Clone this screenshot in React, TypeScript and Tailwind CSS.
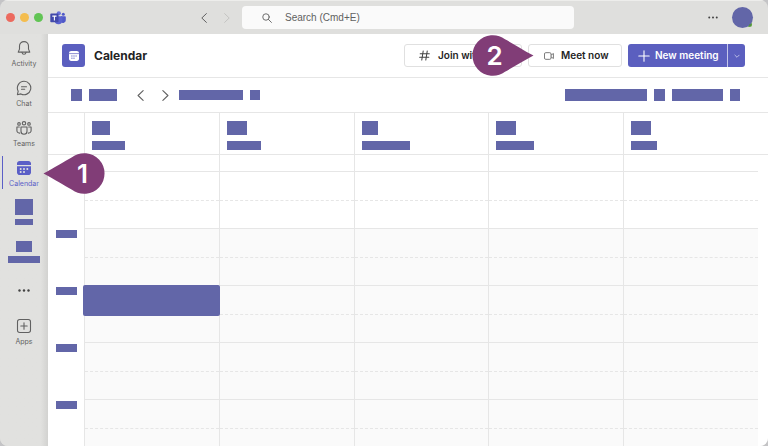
import React from "react";

interface Day {
  id: string;
  date: string;
  name: string;
}

const DAYS: Day[] = [
  { id: "mon", date: "w-[18px]", name: "w-[33px]" },
  { id: "tue", date: "w-5", name: "w-[34px]" },
  { id: "wed", date: "w-4", name: "w-12" },
  { id: "thu", date: "w-5", name: "w-[38px]" },
  { id: "fri", date: "w-5", name: "w-[26px]" },
];

const HOURS = [
  { id: 7, label: false, working: false, event: false },
  { id: 8, label: true, working: true, event: false },
  { id: 9, label: true, working: true, event: true },
  { id: 10, label: true, working: true, event: false },
  { id: 11, label: true, working: true, event: false },
];

const App: React.FC = () => (
  <div className="h-screen overflow-hidden bg-[#c4c4c6] font-['Inter',sans-serif] text-[#242424]">
    <div className="flex h-full flex-col overflow-hidden rounded-lg bg-[#dfdfdd]">
      <TitleBar />
      <div className="flex min-h-0 flex-1">
        <Sidebar />
        <main className="flex min-w-0 flex-1 flex-col bg-white">
          <PageHeader />
          <Toolbar />
          <WeekGrid />
        </main>
      </div>
    </div>
  </div>
);

const TitleBar: React.FC = () => (
  <header className="flex h-[34px] shrink-0 items-center border-t border-[#ededeb] pr-[15px] pl-[6px]">
    <div className="flex items-center gap-[5px]">
      <span className="size-[9px] rounded-full bg-[#ec6a5e]" />
      <span className="size-[9px] rounded-full bg-[#f4bd4f]" />
      <span className="size-[9px] rounded-full bg-[#61c454]" />
    </div>
    <TeamsLogo />
    <div className="flex flex-1 items-center justify-end gap-[17px] pr-3">
      <button aria-label="Back" className="text-[#616161]">
        <Chevron direction="left" className="h-2.5 w-1.5" />
      </button>
      <button aria-label="Forward" className="text-[#c4c4c2]">
        <Chevron direction="right" className="h-2.5 w-1.5" />
      </button>
    </div>
    <label className="flex h-[23px] w-4/9 items-center gap-[13px] rounded bg-[#fafafa] pl-5">
      <svg viewBox="0 0 12 12" className="size-[10px] shrink-0" fill="none" stroke="#616161" strokeWidth="1.1" strokeLinecap="round">
        <circle cx="4.8" cy="4.8" r="3.9" />
        <path d="M7.7 7.7 11.3 11.3" />
      </svg>
      <input
        type="text"
        aria-label="Search"
        placeholder="Search (Cmd+E)"
        className="w-full bg-transparent font-['Liberation_Sans',sans-serif] text-[10px] outline-none placeholder:text-[#616161]"
      />
    </label>
    <div className="flex w-[179px] items-center justify-end gap-[14px]">
      <button aria-label="Settings and more" className="text-[#424242]">
        <Dots className="h-[3px] w-[10px]" />
      </button>
      <div className="relative size-[21px]">
        <span className="absolute right-px bottom-px size-[5px] rounded-full bg-[#5fa53f]" />
        <span className="absolute inset-0 rounded-full bg-[#6266a8]" />
        <span className="absolute right-[2px] bottom-[2px] size-[2px] rounded-full bg-[#4f8a4a]" />
      </div>
    </div>
  </header>
);

const Sidebar: React.FC = () => (
  <nav className="flex w-12 shrink-0 flex-col bg-linear-to-r from-[#e1e1df] from-85% to-[#d2d2d0] pt-[2px] text-[#616161]">
    <NavItem label="Activity">
      <path d="M8 1.6c-2.6 0-4.5 2-4.5 4.5v3L2.2 12.1h11.6L12.5 9.1V6.1C12.5 3.6 10.6 1.6 8 1.6Z" />
      <path d="M6 12.3c.2 1.3 1 2 2 2s1.8-.7 2-2" />
    </NavItem>
    <NavItem label="Chat">
      <path d="M8 1.3a6.7 6.7 0 1 1-3.1 12.6L1.400 14.700l.8-3.500A6.700 6.700 0 0 1 8 1.300Z" />
      <path d="M5.5 6.800h5M5.500 9.300h3.200" />
    </NavItem>
    <NavItem label="Teams">
      <circle cx="8" cy="3.3" r="1.7" />
      <circle cx="3" cy="3.9" r="1.3" />
      <circle cx="13" cy="3.9" r="1.3" />
      <path d="M5 7h6v4.200a3 3 0 0 1-6 0Z" />
      <path d="M3.300 7H.9v3.400c0 1.700 1.200 2.800 2.900 2.700M12.700 7h2.400v3.400c0 1.700-1.200 2.800-2.900 2.700" />
    </NavItem>
    <NavItem label="Calendar" active>
      <path
        d="M1 5V3.600C1 2.200 2.200 1 3.600 1h8.800C13.800 1 15 2.200 15 3.600V5ZM1 6.200h14v6.200c0 1.400-1.200 2.600-2.600 2.600H3.600C2.200 15 1 13.800 1 12.400Z"
        fill="currentColor"
        stroke="none"
      />
      <g fill="#e1e1df" stroke="none">
        <circle cx="4.7" cy="9" r="1" />
        <circle cx="8" cy="9" r="1" />
        <circle cx="11.3" cy="9" r="1" />
        <circle cx="4.7" cy="12" r="1" />
        <circle cx="8" cy="12" r="1" />
      </g>
    </NavItem>
    <div className="flex flex-col items-center pt-[3px]">
      <Block className="h-4 w-[18px]" />
      <Block className="mt-1 h-[6px] w-[18px]" />
      <Block className="mt-4 h-[11px] w-4" />
      <Block className="mt-1 h-[7px] w-8" />
      <button aria-label="More apps" className="mt-[26px] text-[#424242]">
        <Dots className="h-[3px] w-3" />
      </button>
    </div>
    <div className="pt-[22px]">
      <NavItem label="Apps">
        <rect x="1.5" y="1.5" width="13" height="13" rx="2.2" />
        <path d="M8 4.800v6.400M4.800 8h6.400" />
      </NavItem>
    </div>
  </nav>
);

const NavItem: React.FC<{
  label: string;
  active?: boolean;
  children: React.ReactNode;
}> = ({ label, active = false, children }) => (
  <div className="relative">
    <a
      href="#"
      aria-current={active ? "page" : undefined}
      className={`flex h-10 flex-col items-center gap-[3px] pt-1 ${active ? "text-[#5b5fc7]" : ""}`}
    >
      <svg viewBox="0 0 16 16" className="size-4 shrink-0" fill="none" stroke="currentColor" strokeWidth="1.1" strokeLinejoin="round" strokeLinecap="round">
        {children}
      </svg>
      <span className="text-[7px] leading-[10px]">{label}</span>
    </a>
    {active && (
      <>
        <span className="absolute top-0 left-[2px] h-[33px] w-px bg-[#5b5fc7]" />
        <Marker label="1" direction="left" className="top-[-3px] left-[43px]" />
      </>
    )}
  </div>
);

const PageHeader: React.FC = () => (
  <div className="flex h-11 shrink-0 items-center border-b border-[#e6e6e6] pr-[23px] pl-[14px]">
    <div className="flex size-[23px] items-center justify-center rounded-[3px] bg-[#5b5fbf]">
      <svg viewBox="0 0 12 12" className="size-3">
        <path d="M1 3.200C1 1.900 1.900 1 3.200 1h5.600C10.100 1 11 1.900 11 3.200v5.600c0 1.300-.9 2.200-2.200 2.200H3.200C1.900 11 1 10.100 1 8.800Z" fill="#fff" />
        <path d="M1 3.600h10" stroke="#5b5fbf" strokeWidth=".7" />
        <path d="M3.300 6h1.200M5.400 6h1.200M7.500 6h1.200M3.300 8.200h1.200M5.400 8.200h1.200" stroke="#5b5fbf" strokeWidth="1" />
      </svg>
    </div>
    <h1 className="ml-[9px] flex-1 text-[12px] font-bold">Calendar</h1>
    <div className="flex gap-[6px] text-[10px] font-semibold">
      <button className="flex h-[23px] w-[118px] items-center gap-2 rounded-[3px] border border-[#e0e0e0] pl-[14px] whitespace-nowrap">
        <svg viewBox="0 0 12 12" className="size-[11px] shrink-0" fill="none" stroke="#424242" strokeWidth="1.1" strokeLinecap="round">
          <path d="M4.600 1 3 11M9 1 7.400 11M1.300 4h10M.7 8h10" />
        </svg>
        Join with an ID
      </button>
      <div className="relative">
        <button className="flex h-[23px] w-[94px] items-center gap-[7px] rounded-[3px] border border-[#e0e0e0] pl-[15px] whitespace-nowrap">
          <svg viewBox="0 0 12 12" className="size-[10px] shrink-0" fill="none" stroke="#616161" strokeLinejoin="round">
            <rect x=".6" y="2" width="7.8" height="8" rx="1.5" />
            <path d="M8.400 5 11.300 3v6L8.400 7" />
          </svg>
          Meet now
        </button>
        <Marker label="2" direction="right" className="top-[-9px] left-[-56px]" />
      </div>
      <div className="flex h-[23px] overflow-hidden rounded-[3px] bg-[#5b5fbf] text-white">
        <button className="flex w-[99px] items-center gap-[5px] pl-[10px] whitespace-nowrap">
          <svg viewBox="0 0 12 12" className="size-3 shrink-0" fill="none" stroke="currentColor" strokeWidth="1.1" strokeLinecap="round">
            <path d="M6 .8v10.400M.8 6h10.400" />
          </svg>
          New meeting
        </button>
        <button aria-label="More meeting options" className="flex w-[18px] items-center justify-center border-l border-[#c5c7ea]">
          <svg viewBox="0 0 8 8" className="size-[6px]" fill="none" stroke="#c5c7ea" strokeWidth="1.2">
            <path d="M.8 2.500 4 5.700l3.200-3.200" />
          </svg>
        </button>
      </div>
    </div>
  </div>
);

const Toolbar: React.FC = () => (
  <div className="flex h-[35px] shrink-0 items-center border-b border-[#e6e6e6] pr-7 pl-[23px]">
    <Block className="h-3 w-[11px]" />
    <Block className="ml-[7px] h-3 w-7" />
    <button aria-label="Previous week" className="ml-5 text-[#616161]">
      <Chevron direction="left" className="h-[11px] w-[7px]" />
    </button>
    <button aria-label="Next week" className="ml-[18px] text-[#616161]">
      <Chevron direction="right" className="h-[11px] w-[7px]" />
    </button>
    <Block className="ml-[10px] h-[10px] w-16" />
    <Block className="ml-[7px] h-[10px] w-[10px]" />
    <div className="flex flex-1 justify-end gap-[7px]">
      <Block className="h-3 w-[82px]" />
      <Block className="h-3 w-[11px]" />
      <Block className="h-3 w-[51px]" />
      <Block className="h-3 w-[10px]" />
    </div>
  </div>
);

const WeekGrid: React.FC = () => (
  <div className="min-h-0 flex-1 overflow-hidden">
    <div className="flex h-[42px] border-b border-[#e6e6e6] pr-[10px] pl-9">
      {DAYS.map((day) => (
        <div key={day.id} className="flex-1 border-l border-[#e6e6e6] pt-2 pl-[7px]">
          <Block className={`h-[14px] ${day.date}`} />
          <Block className={`mt-[6px] h-[9px] ${day.name}`} />
        </div>
      ))}
    </div>
    <div className="flex h-4 pr-[10px] pl-9">
      {DAYS.map((day) => (
        <div key={day.id} className="flex-1 border-l border-[#e6e6e6]" />
      ))}
    </div>
    {HOURS.map((hour) => (
      <div key={hour.id} className="flex h-[57px] pr-[10px]">
        <div className="w-9 pt-[2px] pl-2">
          {hour.label && <Block className="h-2 w-[21px]" />}
        </div>
        {DAYS.map((day, idx) => (
          <div
            key={day.id}
            className={`relative flex-1 border-t border-l border-[#e6e6e6] ${hour.working ? "bg-[#fafafa]" : "bg-white"}`}
          >
            <div className="h-[29px] border-b border-dashed border-[#e6e6e6]" />
            {hour.event && idx === 0 && (
              <div className="absolute -top-px -right-px -left-[2px] z-10 h-[31px] rounded-[2px] bg-[#6266a8]" />
            )}
          </div>
        ))}
      </div>
    ))}
  </div>
);

// Small shared pieces
const Block: React.FC<{ className: string }> = ({ className }) => (
  <div className={`shrink-0 bg-[#6266a8] ${className}`} />
);

const Chevron: React.FC<{ direction: "left" | "right"; className: string }> = ({ direction, className }) => (
  <svg viewBox="0 0 6 10" className={className} fill="none" stroke="currentColor" strokeLinecap="round" strokeLinejoin="round">
    <path d={direction === "left" ? "M5.4.6.8 5l4.600 4.400" : "M.6.6 5.200 5 .6 9.400"} />
  </svg>
);

const Dots: React.FC<{ className: string }> = ({ className }) => (
  <svg viewBox="0 0 12 3" className={className} fill="currentColor">
    <circle cx="1.5" cy="1.5" r="1.2" />
    <circle cx="6" cy="1.5" r="1.2" />
    <circle cx="10.5" cy="1.5" r="1.2" />
  </svg>
);

const Marker: React.FC<{
  label: string;
  direction: "left" | "right";
  className: string;
}> = ({ label, direction, className }) => (
  <div className={`pointer-events-none absolute z-20 h-[41px] w-[62px] ${className}`}>
    <svg viewBox="0 0 62 41" className="size-full" fill="#813d77">
      {direction === "left" ? (
        <path d="M.5 20.5C12 14.500 21 8.500 29 4.300A20.300 20.300 0 1 1 29 36.700C21 32.500 12 26.500 .5 20.500Z" />
      ) : (
        <path d="M61.5 20.5C50 14.500 41 8.500 33 4.300A20.300 20.300 0 1 0 33 36.700C41 32.500 50 26.500 61.500 20.500Z" />
      )}
    </svg>
    <span
      className={`absolute inset-y-0 flex w-[45px] items-center justify-center text-[26px] font-semibold text-white ${direction === "left" ? "right-0" : "left-0"}`}
    >
      {label}
    </span>
  </div>
);

const TeamsLogo: React.FC = () => (
  <svg viewBox="0 0 16 14" className="ml-[7px] h-[14px] w-4 shrink-0">
    <circle cx="13.3" cy="3.2" r="1.5" fill="#5059c9" />
    <path d="M11 5.200h4c.5 0 .8.300.8.800v3.200a2.700 2.700 0 0 1-4.800 1.700Z" fill="#5059c9" />
    <circle cx="8.8" cy="2.3" r="2.1" fill="#6b73dc" />
    <path d="M5.600 5.200h6c.4 0 .7.300.7.700v3.800a3.900 3.900 0 0 1-7.700.6Z" fill="#5a62cf" />
    <rect x=".3" y="2.6" width="8.2" height="8.6" rx=".8" fill="#4249ab" />
    <path d="M2.300 5.100h4.200M4.400 5.100v4.400" stroke="#fff" strokeWidth="1.1" />
  </svg>
);

export default App;
